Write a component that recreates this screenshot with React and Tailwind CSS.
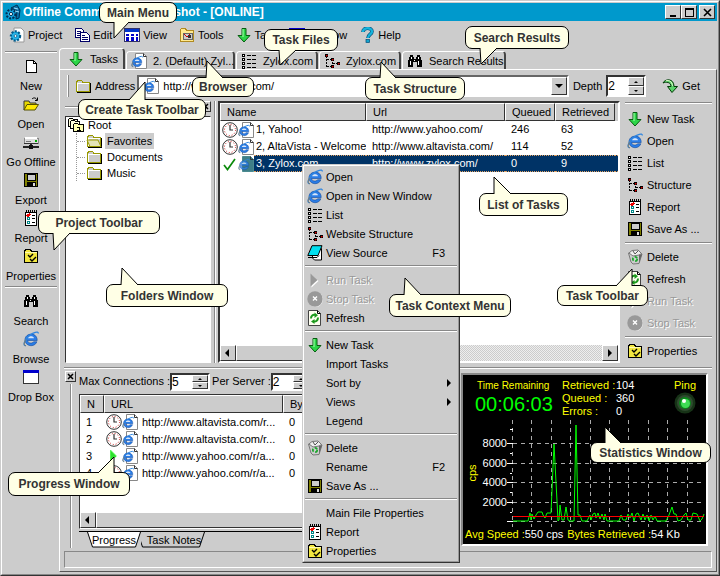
import React from "react";

const raised = "border border-t-white border-l-white border-r-[#333] border-b-[#333] bg-[#ccc]";
const sunken = "border border-t-[#333] border-l-[#333] border-r-white border-b-white";

/* ---------- icons ---------- */

function Ico({ children, smooth, className = "" }) {
  return (
    <svg
      className={"h-4 w-4 shrink-0 " + className}
      viewBox="0 0 16 16"
      fill="none"
      shapeRendering={smooth ? "auto" : "crispEdges"}
      aria-hidden="true"
    >
      {children}
    </svg>
  );
}

const Gear = () => (
  <Ico smooth>
    <path d="M5 1h7l3 3v11H5z" fill="#fff" stroke="#999" />
    <circle cx="6.5" cy="9" r="4.6" fill="#1aa7dd" stroke="#035b8c" strokeWidth="2.2" strokeDasharray="2 1.4" />
    <circle cx="6.5" cy="9" r="3.2" fill="#27b4e8" />
    <circle cx="6.5" cy="9" r="1.4" fill="#fff" stroke="#035b8c" strokeWidth=".8" />
  </Ico>
);

const AppLogo = () => (
  <Ico smooth>
    <circle cx="6" cy="10" r="4.4" fill="#19a7e0" stroke="#012f55" strokeWidth="2.2" strokeDasharray="2 1.3" />
    <circle cx="6" cy="10" r="1.6" fill="#fff" stroke="#012f55" />
    <path d="M6 4L12 1l3 5-1 8-3 1 1-8z" fill="#0a6fa5" stroke="#012f55" />
    <path d="M9 4l4 1M10 7l4 1" stroke="#9fe3ff" />
  </Ico>
);

const Copy = () => (
  <Ico>
    <path d="M1.5 1.5h6l2 2v7h-8z" fill="#fff" stroke="#006" />
    <path d="M3 4h4M3 6h5M3 8h5" stroke="#006" />
    <path d="M6.5 5.5h6l3 3v6h-9z" fill="#fff" stroke="#006" />
    <path d="M8 8.500h3M8 10.500h6M8 12.500h6" stroke="#006" />
  </Ico>
);

const ViewGrid = () => (
  <Ico>
    <rect x="0" y="1" width="16" height="14" fill="#fff" />
    <rect x="0" y="1" width="16" height="4" fill="#03c" />
    <path d="M.5 1.500h15v13h-15z" stroke="#336" />
    <path d="M2 7.500h3M7 7.500h3M12 7.500h2M2 10.500h3M7 10.500h3M12 10.500h2M2 13h3M7 13h3M12 13h2" stroke="#00c" strokeWidth="2" />
  </Ico>
);

const ToolFolder = () => (
  <Ico>
    <path d="M1.5 14.500v-12l1-1h4l1 2h7v11z" fill="#ffe98f" stroke="#b08a20" />
    <rect x="4" y="6" width="9" height="6" fill="#ccc" stroke="#666" />
    <path d="M5 7l3 3M8 10l3-3" stroke="#c00" strokeWidth="1.400" />
    <path d="M9 8h3v3H9z" fill="#333" />
  </Ico>
);

const DownArrow = () => (
  <Ico smooth>
    <path d="M6 1.500h4v7h4L8 15 2 8.500h4z" fill="#2cd648" stroke="#075c10" />
    <path d="M7 2v8" stroke="#a8ffb0" />
  </Ico>
);

const WindowIcon = () => (
  <Ico>
    <rect x=".5" y="1.500" width="15" height="13" fill="#fff" stroke="#333" />
    <rect x="0" y="1" width="16" height="3" fill="#00c" />
  </Ico>
);

const HelpIcon = () => (
  <Ico smooth>
    <path d="M4 5c0-5 9-5 9-.5C13 7.500 9 7 9 11" stroke="#024a78" strokeWidth="3.600" />
    <path d="M4 5c0-5 9-5 9-.5C13 7.500 9 7 9 11" stroke="#15b4dc" strokeWidth="2.400" />
    <rect x="7" y="12.500" width="3.600" height="3" fill="#15a4cc" stroke="#024a78" strokeWidth=".7" />
  </Ico>
);

const EShape = () => (
  <>
    <path d="M14.200 9.500H4.500c.2 2.600 4.600 3.600 6 1.300h3.400C11.500 17 1.800 15.500 2 8.600 2.300 1.500 14.400.8 14.200 9.500z" fill="#2b7de6" stroke="#114a9e" strokeWidth=".6" />
    <path d="M5 7.200c.6-2.600 5.400-2.600 6 0z" fill="#d6e6fa" />
    <path d="M3 14.500C-.5 15.500 1 9 6 4.800 10 1.500 15.500-.3 15.300 2.500" stroke="#2f86e0" strokeWidth="1.300" />
    <path d="M2.800 14.800C.5 14.500 1 11 3 8.500" stroke="#8a7a5a" strokeWidth="1" />
  </>
);

const IE = () => (
  <Ico smooth>
    <EShape />
  </Ico>
);

const IEDoc = ({ tint }) => (
  <Ico smooth>
    <path d="M4.500.5h8l3 3v12h-11z" fill={tint ? "#3f7f88" : "#fff"} stroke={tint ? "#4b8a90" : "#888"} />
    <path d="M12.500.5v3h3" stroke="#333" />
    <g transform="translate(0 2.500) scale(.76)" opacity={tint ? 0.8 : 1}>
      <EShape />
    </g>
  </Ico>
);

const ListIcon = () => (
  <Ico>
    <path d="M1.500 1.500h2v2h-2zM1.500 5.500h2v2h-2zM1.500 9.500h2v2h-2zM1.500 13.500h2v1.500h-2z" fill="#fff" stroke="#000" />
    <path d="M6 2.500h9M6 6.500h9M6 10.500h9M6 14.500h9" stroke="#000" strokeDasharray="4 1" />
  </Ico>
);

const TreeIcon = () => (
  <Ico>
    <path d="M2.500 3v11M2.500 6.500h4M2.500 13.500h4M8.500 6v6M9 10.500h4" stroke="#000" strokeDasharray="2 1" />
    <path d="M1 1h3v3H1zM7 5h3v3H7zM7 12h3v3H7zM13 9h3v3h-3z" fill="#000" />
    <path d="M2 2h1v1H2zM8 6h1v1H8zM8 13h1v1H8zM14 10h1v1h-1z" fill="#f00" stroke="#c00" strokeWidth=".6" />
  </Ico>
);

const Binoculars = () => (
  <Ico>
    <path d="M3 2h3v2h1v2h2V4h1V2h3v2h1v3h1v7h-5V9H6v5H1V7h1V4h1z" fill="#000" />
    <path d="M4 4v2M3 8v4M11 4v2M11 8v4M7.500 7v1" stroke="#fff" />
  </Ico>
);

const Page = () => (
  <Ico>
    <path d="M3.500 2.500h7l3 3v9h-10z" fill="#fff" stroke="#000" />
    <path d="M10.500 2.500v3h3" stroke="#000" />
  </Ico>
);

const OpenFolder = () => (
  <Ico smooth>
    <path d="M1 14V5h5l1 2h6v2" fill="#e8d800" stroke="#333" />
    <path d="M1 14L4 8.500h11.500L12 14z" fill="#ffea00" stroke="#555000" />
    <path d="M9 3c2-2 4-1 5 1M14.500 1.500V4.500H12" stroke="#000" />
  </Ico>
);

const Drive = () => (
  <Ico>
    <path d="M1 4h14v5H1z" fill="#ddd" stroke="#888" />
    <path d="M2 3h12v2H2z" fill="#fff" />
    <path d="M1 9h14" stroke="#333" />
    <path d="M3 7h5" stroke="#777" />
    <path d="M12 7h2" stroke="#0a0" strokeWidth="2" />
    <path d="M8 10v3M0 13h16" stroke="#222" strokeWidth="2" />
    <path d="M6 11h4v4H6z" fill="#111" />
  </Ico>
);

const Floppy = () => (
  <Ico>
    <path d="M1.500 1.500h13v13h-13z" fill="#808000" stroke="#000" />
    <path d="M4 2h8v6H4z" fill="#ccc" stroke="#000" />
    <path d="M4 10h9v4H4z" fill="#000" />
    <path d="M10 11h2v3h-2z" fill="#ddd" />
  </Ico>
);

const ReportIcon = () => (
  <Ico>
    <path d="M2.500 2.500h11v13h-11z" fill="#fff" stroke="#000" />
    <path d="M3 1.500h11" stroke="#000" strokeDasharray="1 1" strokeWidth="3" />
    <path d="M4 5l1 1 2-2" stroke="#e00" strokeWidth="1.500" />
    <path d="M4.500 7.500h2v2h-2zM4.500 11.500h2v2h-2z" stroke="#088" />
    <path d="M9 5.500h3M9 8.500h3M9 12.500h3" stroke="#000" />
  </Ico>
);

const PropsIcon = () => (
  <Ico>
    <path d="M1.500 3.500l1-2h5l1 2h6v11h-13z" fill="#f2e640" stroke="#000" />
    <path d="M2 4.500h12" stroke="#fffbb0" />
    <path d="M5 7l2 2 3-3M7 11l2 2 4-4" stroke="#000" strokeWidth="1.400" shapeRendering="auto" />
  </Ico>
);

const SourceIcon = () => (
  <Ico smooth>
    <path d="M5.500 3.500h9v11.500h-7l-2-2z" fill="#fff" stroke="#000" />
    <path d="M5 .7h10l-4 9.800H.8z" fill="#00e0f0" stroke="#000" />
    <path d="M1 12.500h9l2-2" stroke="#000" />
  </Ico>
);

const RunIcon = () => (
  <Ico smooth>
    <path d="M4.500 2.500l7 6.500-7 6.500z" fill="#fff" />
    <path d="M3.500 1.500l7 6.500-7 6.500z" fill="#999" />
  </Ico>
);

const StopIcon = () => (
  <Ico smooth>
    <circle cx="8.500" cy="8.500" r="7.500" fill="#fff" />
    <circle cx="8" cy="8" r="7.700" fill="#999" />
    <path d="M6 5.500l4 4M10 5.500l-4 4" stroke="#fff" strokeWidth="1.400" />
  </Ico>
);

const RefreshIcon = () => (
  <Ico smooth>
    <path d="M1.500.5h9l3 3v12h-12z" fill="#fffff0" stroke="#444" />
    <path d="M10.500.5v3h3" stroke="#000" />
    <path d="M4 8.500c0-3 2-4 4-3.500M11 7.500c0 3-2 4.500-4.500 4" stroke="#1c9a1c" strokeWidth="2" />
    <path d="M7.500 2.500l3.500 2.800L7.500 8zM7.500 9l-3.500 2.500L7.500 14z" fill="#1c9a1c" />
  </Ico>
);

const BinIcon = () => (
  <Ico smooth>
    <path d="M1.500 4l11-1.500L15 5l-3 9.500-6 .5-2-2z" fill="#ccc" stroke="#777" />
    <path d="M2 4l3-2.500 6-.5 3.500 3.500L12 6l-6 1z" fill="#eee" stroke="#777" />
    <path d="M6 2l2 3 3-3" stroke="#555" />
    <path d="M12 6v8l3-9z" fill="#666" />
    <circle cx="8" cy="10" r="2.200" stroke="#19a52a" strokeWidth="1.700" strokeDasharray="3 1.500" />
  </Ico>
);

const GetIcon = () => (
  <Ico smooth>
    <path d="M1 5C3 .5 12 0 12 8.500h3.500L10 14.500 5.500 8.500H9C9 4 4 3.500 1 5z" fill="#5bd46a" stroke="#033a08" />
    <path d="M4 2.800c3-1 6 .5 6.500 5" stroke="#eaffd0" />
  </Ico>
);

const Folder = ({ open }) => (
  <Ico>
    <path d="M1.500 13.500v-9l1-2h4l1.500 2h6.500v9z" fill="#ccc" stroke="#999900" />
    <path d="M2 5.500h12" stroke="#fff" />
    <path d="M2.500 5v8" stroke="#fff" />
    <path d="M15.500 5v9.500H2" stroke="#000" />
    {open && <path d="M1 7h11l3 6.500H4z" fill="#e4e4b8" stroke="#999900" shapeRendering="auto" />}
  </Ico>
);

const RootIcon = () => (
  <Ico>
    <path d="M.5 9.500v-7l1-1h3l1 1h4v7z" fill="#ffd" stroke="#000" />
    <path d="M2.500 11.500v-7l1-1h3l1 1h4v7z" fill="#ffd" stroke="#000" />
    <path d="M5.500 14.500v-7l1-1h3l1 1h5v7z" fill="#ffffb0" stroke="#000" />
    <path d="M9 10h2v3M9 13.500h4" stroke="#000" />
  </Ico>
);

const Clock = () => (
  <Ico smooth>
    <circle cx="8" cy="8" r="7.300" fill="#fff" stroke="#333" strokeWidth="1" />
    <circle cx="8" cy="8" r="5.500" stroke="#c22" strokeWidth="1" strokeDasharray="1 1.880" />
    <path d="M8 3v5h3" stroke="#333" strokeWidth="1.200" />
  </Ico>
);

const Check = () => (
  <Ico smooth>
    <path d="M2 9l3.500 4.500L13 3" stroke="#0b8a0b" strokeWidth="1.700" />
  </Ico>
);

const Play = () => (
  <Ico>
    <path d="M4 2v11l1-1h1v-1h1v-1h1V9h2V7H9V6H8V5H7V4H6V3H5V2z" fill="#2ee02e" stroke="#7f7" strokeWidth=".5" />
  </Ico>
);

/* ---------- small controls ---------- */

function Tri({ dir, className = "" }) {
  const d = {
    left: "M5 0v8L1 4z",
    right: "M2 0v8l4-4z",
    down: "M0 2h8L4 6z",
    up: "M2 5h4L4 3z",
    downSmall: "M2 3h4L4 5z",
  }[dir];
  return (
    <svg className={"h-2 w-2 shrink-0 " + className} viewBox="0 0 8 8" aria-hidden="true">
      <path d={d} fill="#000" />
    </svg>
  );
}

function Spinner({ id, value, tall }) {
  return (
    <span className={"flex w-10 shrink-0 border-2 border-t-[#333] border-l-[#333] border-r-white border-b-white bg-white " + (tall ? "h-[22px]" : "h-[18px]")}>
      <input id={id} defaultValue={value} className="min-w-0 flex-1 bg-transparent text-[12px] leading-3 outline-none" />
      <span className="flex w-4 flex-col">
        <button type="button" aria-label="Increase" className={"flex flex-1 items-center justify-center overflow-hidden " + raised}><Tri dir="up" /></button>
        <button type="button" aria-label="Decrease" className={"flex flex-1 items-center justify-center overflow-hidden " + raised}><Tri dir="downSmall" /></button>
      </span>
    </span>
  );
}

function HScroll({ thumb }) {
  return (
    <div className="flex h-4 shrink-0 bg-[repeating-conic-gradient(#ccc_0_25%,#eee_0_50%)] bg-[length:2px_2px]">
      <button type="button" aria-label="Scroll left" className={"flex w-4 items-center justify-center " + raised}><Tri dir="left" /></button>
      <div className={thumb + " " + raised} />
      <div className="flex-1" />
      <button type="button" aria-label="Scroll right" className={"flex w-4 items-center justify-center " + raised}><Tri dir="right" /></button>
    </div>
  );
}

function CloseSmall() {
  return (
    <button type="button" aria-label="Close panel" className={"flex h-[11px] w-[11px] shrink-0 items-center justify-center " + raised}>
      <svg className="h-[7px] w-[7px]" viewBox="0 0 7 7" aria-hidden="true"><path d="M1 1l5 5M6 1L1 6" stroke="#000" strokeWidth="1.500" /></svg>
    </button>
  );
}

const Rule = ({ className = "" }) => (
  <div className={"h-[2px] border-t border-b border-t-[#888] border-b-white " + className} />
);

/* ---------- window parts ---------- */

function TitleBar() {
  const btn = "flex h-[14px] w-4 items-center justify-center " + raised;
  return (
    <header className="flex h-[18px] items-center bg-[#0099cc] px-[2px] text-white">
      <AppLogo />
      <h1 className="ml-[2px] flex-1 text-[12px] font-bold whitespace-nowrap">Offline Commander - Snapshot - [ONLINE]</h1>
      <button type="button" aria-label="Minimize" className={btn}><svg className="h-[9px] w-[9px]" viewBox="0 0 9 9"><path d="M1 7h6v2H1z" fill="#000" /></svg></button>
      <button type="button" aria-label="Maximize" className={btn}><svg className="h-[9px] w-[9px]" viewBox="0 0 9 9" shapeRendering="crispEdges"><path d="M.5.500h8v8h-8zM0 1.500h9" stroke="#000" fill="none" /></svg></button>
      <button type="button" aria-label="Close" className={btn + " ml-[2px]"}><svg className="h-[9px] w-[9px]" viewBox="0 0 9 9"><path d="M1 1l7 7M8 1L1 8" stroke="#000" strokeWidth="1.600" /></svg></button>
    </header>
  );
}

const menus = [
  ["Project", Gear], ["Edit", Copy], ["View", ViewGrid], ["Tools", ToolFolder],
  ["Task", DownArrow], ["Window", WindowIcon], ["Help", HelpIcon],
];

function MenuBar() {
  return (
    <nav className="flex h-[27px] items-center gap-3 pl-1.5">
      {menus.map(([label, I]) => (
        <button key={label} type="button" className="flex items-center gap-[3px]"><I />{label}</button>
      ))}
    </nav>
  );
}

function ProjectToolbar() {
  const item = ([label, I]) => (
    <button key={label} type="button" className="flex h-[38px] w-full flex-col items-center gap-1 pt-px whitespace-nowrap">
      <I /><span className="leading-4">{label}</span>
    </button>
  );
  return (
    <aside className="w-14 shrink-0 pt-[3px] pr-0.5 pl-0.5">
      <Rule className="mb-1" />
      {[["New", Page], ["Open", OpenFolder], ["Go Offline", Drive], ["Export", Floppy], ["Report", ReportIcon], ["Properties", PropsIcon]].map(item)}
      <Rule className="mt-px mb-1" />
      {[["Search", Binoculars], ["Browse", IE], ["Drop Box", WindowIcon]].map(item)}
    </aside>
  );
}

function Tab({ icon: I, children, active, className }) {
  return (
    <button
      type="button"
      role="tab"
      aria-selected={!!active}
      className={
        "flex shrink-0 items-center gap-1.5 rounded-t-sm border-t border-r-2 border-l border-t-white border-l-white border-r-[#444] pl-1 whitespace-nowrap " +
        (active ? "h-[21px] " : "h-[18px] ") + className
      }
    >
      <I />{children}
    </button>
  );
}

function AddressBar() {
  return (
    <form className="flex h-[31px] items-start pt-[5px] pr-4 pl-[7px]" onSubmit={(e) => e.preventDefault()}>
      <div className="h-[22px] w-[2px] border-r border-l border-r-[#888] border-l-white" />
      <div className="flex h-[22px] items-center gap-1 pr-0.5 pl-1.5"><Folder /><label htmlFor="address">Address</label></div>
      <div className="flex h-[22px] flex-1 items-center border-2 border-t-[#666] border-l-[#666] border-r-white border-b-white bg-white pl-1">
        <IEDoc />
        <input id="address" defaultValue="http://www.yahoo.com/" className="min-w-0 flex-1 bg-transparent pl-1 outline-none" />
        <button type="button" aria-label="Show addresses" className={"flex h-full w-4 items-center justify-center " + raised}><Tri dir="down" /></button>
      </div>
      <label htmlFor="depth" className="px-1 leading-[22px]">Depth</label>
      <Spinner id="depth" value="2" tall />
      <button type="submit" className="ml-4 flex h-[22px] items-center gap-1"><GetIcon />Get</button>
    </form>
  );
}

function Folders() {
  return (
    <section className="flex w-[146px] shrink-0 flex-col">
      <div className="flex h-[15px] items-center gap-px pb-1"><Rule className="flex-1" /><CloseSmall /></div>
      <ul className={"flex-1 bg-white pl-0.5 " + sunken}>
        <li>
          <span className="flex h-4 items-center gap-1"><RootIcon />Root</span>
          <ul className="ml-2 border-l border-dotted border-[#999]">
            {["Favorites", "Documents", "Music"].map((n, i) => (
              <li key={n} className="flex h-4 items-center gap-px">
                <span className="w-2 border-t border-dotted border-[#999]" />
                <Folder open={i === 0} />
                <span className={"ml-0.5 px-0.5 leading-4 " + (i === 0 ? "bg-[#ccc]" : "")}>{n}</span>
              </li>
            ))}
          </ul>
        </li>
      </ul>
    </section>
  );
}

const th = "h-[17px] overflow-hidden border border-t-white border-l-white border-r-[#333] border-b-[#333] bg-[#ccc] pl-1.5 text-left font-normal";

function TaskList() {
  const rows = [
    [Clock, "1, Yahoo!", "http://www.yahoo.com/", "246", "63"],
    [Clock, "2, AltaVista - Welcome", "http://www.altavista.com/", "114", "52"],
    [Check, "3, Zylox.com", "http://www.zylox.com/", "0", "9"],
  ];
  return (
    <section className="flex min-w-0 flex-1 flex-col border-2 border-t-[#333] border-l-[#333] border-r-white border-b-white bg-white">
      <div className="flex-1">
        <table className="w-full table-fixed border-separate border-spacing-0 whitespace-nowrap">
          <thead>
            <tr>
              <th className={th + " w-[146px]"}>Name</th>
              <th className={th}>Url</th>
              <th className={th + " w-[50px]"}>Queued</th>
              <th className={th + " w-[60px]"}>Retrieved</th>
              <th className="w-[3px] bg-[#ccc]" aria-label="End" />
            </tr>
          </thead>
          <tbody>
            {rows.map(([S, name, url, q, r], i) => {
              const sel = i === 2 ? "bg-[#003366] text-white border-y border-dotted border-[#e0a060] " : "";
              return (
                <tr key={name} className="h-[17px]">
                  <td className="overflow-hidden p-0">
                    <span className="flex h-[17px] items-center pl-0.5">
                      <S /><IEDoc tint={i === 2} />
                      <span className={"flex-1 pl-0.5 leading-[15px] " + sel}>{name}</span>
                    </span>
                  </td>
                  <td className={"px-1.5 py-0 leading-[15px] " + sel}>{url}</td>
                  <td className={"px-1.5 py-0 leading-[15px] " + sel}>{q}</td>
                  <td className={"px-1.5 py-0 leading-[15px] " + sel}>{r}</td>
                  <td className={"p-0 " + sel} />
                </tr>
              );
            })}
          </tbody>
        </table>
      </div>
      <HScroll thumb="w-2/5" />
    </section>
  );
}

const off = "text-[#999] [text-shadow:1px_1px_0_#fff]";

function TaskToolbar() {
  const item = ([label, I, dis]) => (
    <button key={label} type="button" disabled={!!dis} className={"flex h-[22px] w-full items-center gap-1 pl-0.5 whitespace-nowrap " + (dis ? off : "")}>
      <I />{label}
    </button>
  );
  return (
    <aside className="ml-[5px] w-[87px] shrink-0 pt-px">
      <Rule className="mb-1" />
      {[["New Task", DownArrow], ["Open", IE], ["List", ListIcon], ["Structure", TreeIcon], ["Report", ReportIcon], ["Save As ...", Floppy]].map(item)}
      <Rule className="my-0.5" />
      {[["Delete", BinIcon], ["Refresh", RefreshIcon], ["Run Task", RunIcon, 1], ["Stop Task", StopIcon, 1]].map(item)}
      <Rule className="my-0.5" />
      {[["Properties", PropsIcon]].map(item)}
    </aside>
  );
}

function Progress() {
  const rows = [
    [Clock, "http://www.altavista.com/r..."],
    [Clock, "http://www.altavista.com/r..."],
    [Play, "http://www.yahoo.com/r/a..."],
    [Clock, "http://www.yahoo.com/r/a..."],
  ];
  return (
    <section className="flex min-w-0 flex-1">
      <div className="flex w-[14px] shrink-0 flex-col gap-0.5 pt-px">
        <CloseSmall />
        <div className="ml-[5px] w-[2px] flex-1 border-r border-l border-r-white border-l-[#888]" />
      </div>
      <div className="flex min-w-0 flex-1 flex-col">
        <div className="flex h-6 items-start pt-[3px] whitespace-nowrap">
          <label htmlFor="maxc" className="leading-4">Max Connections :</label>
          <Spinner id="maxc" value="5" />
          <label htmlFor="pers" className="pl-0.5 leading-4">Per Server :</label>
          <Spinner id="pers" value="2" />
        </div>
        <div className={"flex flex-1 flex-col bg-white " + sunken}>
          <div className="flex-1">
            <table className="w-full table-fixed border-separate border-spacing-0 whitespace-nowrap">
              <thead>
                <tr>
                  <th className={th + " w-6"}>N</th>
                  <th className={th + " w-[179px]"}>URL</th>
                  <th className={th}>Bytes</th>
                </tr>
              </thead>
              <tbody>
                {rows.map(([S, url], i) => (
                  <tr key={i} className="h-[17px]">
                    <td className="py-0 pl-1.5">{i + 1}</td>
                    <td className="overflow-hidden p-0"><span className="flex h-[17px] items-center pl-0.5"><S /><IEDoc /><span className="pl-1">{url}</span></span></td>
                    <td className="py-0 pl-1.5">0</td>
                  </tr>
                ))}
              </tbody>
            </table>
          </div>
          <HScroll thumb="w-3/4" />
        </div>
        <div role="tablist" className="mt-[2px] flex h-[17px] border-t border-black pl-2">
          <button type="button" role="tab" aria-selected="true" className="relative flex h-4 w-[54px] items-center justify-center">
            <svg className="absolute inset-0 h-full w-full" viewBox="0 0 54 16" preserveAspectRatio="none" aria-hidden="true"><path d="M.5 0l5 15h43l5-15" fill="#fff" stroke="#000" /></svg>
            <span className="relative">Progress</span>
          </button>
          <button type="button" role="tab" aria-selected="false" className="relative flex h-4 w-[66px] items-center justify-center">
            <svg className="absolute inset-0 h-full w-full" viewBox="0 0 66 16" preserveAspectRatio="none" aria-hidden="true"><path d="M-1.500 6l3 9h57l5-15" fill="none" stroke="#000" /></svg>
            <span className="relative">Task Notes</span>
          </button>
        </div>
      </div>
    </section>
  );
}

const speed =
  "50,104 65,104 67,96 68,103 69,97 71,102 73,98 75,95 79,95 80,98 82,101 84,96 88,96 91,27 94,84 95,104 96,103 97,88 99,103 101,103 103,90 105,103 107,104 111,104 113,8 115,98 117,98 119,104 124,104 127,98 128,103 130,97 132,96 133,101 135,96 137,102 139,97 141,103 142,97 144,104 156,104 158,98 160,103 163,103 165,97 167,101 169,96 171,104 173,97 175,96 178,103 180,97 182,103 184,98 186,104 188,98 190,103 192,99 194,104 203,104 206,98 209,90 211,97 213,97 215,104 218,103 221,98 223,96 225,103 228,103 230,96 234,97 237,104 239,102 241,97";

function Statistics() {
  return (
    <section className="flex w-[247px] shrink-0 flex-col border-2 border-t-[#888] border-l-[#888] border-r-white border-b-white bg-black leading-[13px] text-[#ff0] whitespace-nowrap">
      <div className="flex h-[42px] pt-1 pl-3">
        <div className="w-[87px]">
          <div className="pl-0.5 text-[10px]">Time Remaining</div>
          <div className="text-[20px] leading-6 text-[#0f0]">00:06:03</div>
        </div>
        <dl className="grid grid-cols-[54px_28px] content-start">
          <dt>Retrieved :</dt><dd className="text-white">104</dd>
          <dt>Queued :</dt><dd className="text-white">360</dd>
          <dt>Errors :</dt><dd className="text-white">0</dd>
        </dl>
        <div className="flex flex-1 flex-col items-center pl-5">
          Ping
          <svg className="h-[22px] w-[22px]" viewBox="0 0 22 22" aria-hidden="true">
            <circle cx="11" cy="11" r="10.500" fill="#173317" />
            <circle cx="11" cy="11" r="8" fill="#2f4a2f" />
            <circle cx="11" cy="11" r="6" fill="#0a8a1a" />
            <circle cx="11.500" cy="11.500" r="4.500" fill="#3fdc55" />
            <circle cx="10" cy="9" r="2" fill="#fff" />
          </svg>
        </div>
      </div>
      <svg className="min-h-0 w-full flex-1" viewBox="0 0 243 110" preserveAspectRatio="xMinYMin meet" role="img" aria-label="Download speed">
        <g stroke="#aaa" strokeDasharray="4 4" shapeRendering="crispEdges">
          {[49.5, 68.5, 88.5, 107.5, 127.5, 146.5, 165.5, 185.500, 204.500, 224.500].map((x) => <path key={x} d={`M${x} 3V110`} />)}
          {[26.5, 46.5, 65.5, 85.5, 104.500].map((y) => <path key={y} d={`M50 ${y}H240`} />)}
        </g>
        <path d="M44 26.500h6M44 46.500h6M44 65.500h6M44 85.500h6M44 104.500h6M47 12.500h3M47 36.500h2M47 56.500h2M47 75.500h2M47 95.500h2" stroke="#fff" shapeRendering="crispEdges" />
        <g fill="#fff" fontSize="11" textAnchor="end">
          <text x="44" y="30">8000</text>
          <text x="44" y="50">6000</text>
          <text x="44" y="69">4000</text>
          <text x="44" y="89">2000</text>
        </g>
        <text fill="#ff0" fontSize="11" textAnchor="middle" transform="translate(13 56) rotate(-90)">cps</text>
        <polyline points={speed} fill="none" stroke="#0f0" />
        <rect x="50" y="99" width="191" height="1" fill="#f00" />
      </svg>
      <div className="flex h-4 gap-1 pl-0.5">
        <span>Avg Speed :<span className="text-white">550 cps</span></span>
        <span>Bytes Retrieved :<span className="text-white">54 Kb</span></span>
      </div>
    </section>
  );
}

/* ---------- overlays ---------- */

const contextGroups = [
  [["Open", IE], ["Open in New Window", IE], ["List", ListIcon], ["Website Structure", TreeIcon], ["View Source", SourceIcon, "F3"]],
  [["Run Task", RunIcon, "", true], ["Stop Task", StopIcon, "", true], ["Refresh", RefreshIcon]],
  [["New Task", DownArrow], ["Import Tasks"], ["Sort by", null, ">"], ["Views", null, ">"], ["Legend"]],
  [["Delete", BinIcon], ["Rename", null, "F2"], ["Save As ...", Floppy]],
  [["Main File Properties"], ["Report", ReportIcon], ["Properties", PropsIcon]],
];

function ContextMenu() {
  return (
    <div role="menu" className="absolute top-[164px] left-[302px] w-[158px] border border-t-[#ccc] border-l-[#ccc] border-r-[#333] border-b-[#333] bg-[#ccc]">
      <div className="border border-t-white border-l-white border-r-[#999] border-b-[#999] p-px">
        {contextGroups.map((g, gi) => (
          <React.Fragment key={gi}>
            {gi > 0 && <Rule className="my-[3px]" />}
            {g.map(([label, I, extra, dis]) => (
              <button key={label} type="button" role="menuitem" disabled={!!dis} className={"flex h-[19px] w-full items-center pr-3 pl-0.5 text-left whitespace-nowrap " + (dis ? off : "")}>
                <span className="w-[19px] shrink-0">{I && <I />}</span>
                <span className="flex-1">{label}</span>
                {extra === ">" ? <Tri dir="right" className="-mr-2" /> : <span>{extra}</span>}
              </button>
            ))}
          </React.Fragment>
        ))}
      </div>
    </div>
  );
}

/* tail: "base1 tip base2" measured from the bubble's outer corner */
const callouts = [
  ["Main Menu", "left-[99px] top-[2px] w-[78px] h-[21px]", "15,20 15,36 30,20"],
  ["Task Files", "left-[264px] top-[29px] w-[74px] h-[22px]", "15,21 16,36 32,21"],
  ["Search Results", "left-[465px] top-[26px] w-[104px] h-[23px]", "15,22 16,38 32,22"],
  ["Browser", "left-[192px] top-[77px] w-[62px] h-[20px]", "14,1 15,-16 31,1"],
  ["Task Structure", "left-[365px] top-[77px] w-[100px] h-[23px]", "15,1 16,-15 31,1"],
  ["Create Task Toolbar", "left-[78px] top-[99px] w-[128px] h-[21px]", "51,1 67,-17 67,1"],
  ["Project Toolbar", "left-[38px] top-[211px] w-[122px] h-[23px]", "15,22 16,39 32,22"],
  ["Folders Window", "left-[106px] top-[284px] w-[122px] h-[23px]", "15,1 16,-16 32,1"],
  ["List of Tasks", "left-[479px] top-[193px] w-[89px] h-[23px]", "15,1 15,-16 32,1"],
  ["Task Context Menu", "left-[389px] top-[294px] w-[122px] h-[23px]", "15,1 16,-16 32,1"],
  ["Task Toolbar", "left-[557px] top-[285px] w-[91px] h-[21px]", "59,1 75,-16 75,1"],
  ["Progress Window", "left-[8px] top-[472px] w-[122px] h-[24px]", "90,1 106,-15 106,1"],
  ["Statistics Window", "left-[590px] top-[442px] w-[121px] h-[21px]", "15,1 15,-15 31,1"],
];

function Callout({ text, place, tail }) {
  return (
    <div className={"absolute flex items-center justify-center rounded-[7px] border border-black bg-[#ffffe6] text-[12px] font-bold whitespace-nowrap text-[#333] " + place}>
      <svg className="absolute -top-px -left-px h-px w-px overflow-visible" aria-hidden="true">
        <polyline points={tail} fill="#ffffe6" stroke="#000" />
      </svg>
      <span className="relative">{text}</span>
    </div>
  );
}

export default function App() {
  return (
    <div className="relative flex min-h-screen flex-col overflow-hidden bg-[#ccc] font-['Liberation_Sans',Arial,sans-serif] text-[11px] leading-4 text-black">
      <div className="flex flex-1 flex-col border border-t-[#ccc] border-l-[#ccc] border-r-[#333] border-b-[#333]">
        <div className="flex flex-1 flex-col border border-t-white border-l-white border-r-[#888] border-b-[#888] p-px">
          <TitleBar />
          <MenuBar />
          <div className="flex flex-1">
            <ProjectToolbar />
            <main className="flex min-w-0 flex-1 flex-col pb-px">
              <div role="tablist" className="flex h-[21px] items-end gap-px">
                <Tab icon={DownArrow} active className="w-[66px] pl-2">Tasks</Tab>
                <Tab icon={IEDoc} className="w-[109px]">2. (Default) Zyl...</Tab>
                <Tab icon={ListIcon} className="w-[82px]">Zylox.com</Tab>
                <Tab icon={TreeIcon} className="w-[82px]">Zylox.com</Tab>
                <Tab icon={Binoculars} className="w-[104px]">Search Results</Tab>
              </div>
              <div className="flex flex-1 flex-col border border-t-white border-l-white border-r-[#555] border-b-[#555]">
                <AddressBar />
                <div className="flex flex-1 pr-1 pl-[5px]">
                  <Folders />
                  <div className="mr-0.5 ml-[3px] w-[2px] border-r border-l border-r-white border-l-[#888]" />
                  <TaskList />
                  <TaskToolbar />
                </div>
                <Rule className="mx-1 mt-1 mb-px" />
                <div className="flex h-[178px] gap-[3px] pr-2 pl-[5px]">
                  <Progress />
                  <div className="flex pt-[3px] pb-0.5"><Statistics /></div>
                </div>
                <div className="mx-1 my-[3px] h-[17px] border border-t-[#888] border-l-[#888] border-r-white border-b-white" />
              </div>
            </main>
          </div>
        </div>
      </div>
      <ContextMenu />
      {callouts.map(([text, place, tail]) => (
        <Callout key={text} text={text} place={place} tail={tail} />
      ))}
    </div>
  );
}
